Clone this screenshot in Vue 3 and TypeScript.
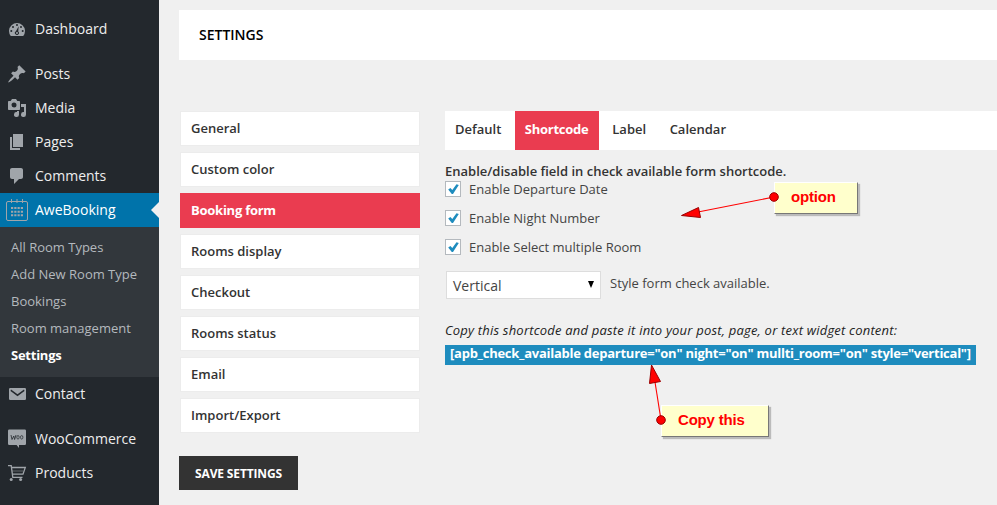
<script setup lang="ts">
interface MenuEntry {
  label: string
  icon: string
  active?: boolean
  gap?: boolean
}

const topMenu: MenuEntry[] = [
  { label: 'Dashboard', icon: 'dashboard' },
  { label: 'Posts', icon: 'posts', gap: true },
  { label: 'Media', icon: 'media' },
  { label: 'Pages', icon: 'pages' },
  { label: 'Comments', icon: 'comments' },
  { label: 'AweBooking', icon: 'calendar', active: true },
]
const submenu = ['All Room Types', 'Add New Room Type', 'Bookings', 'Room management', 'Settings']
const bottomMenu: MenuEntry[] = [
  { label: 'Contact', icon: 'mail' },
  { label: 'WooCommerce', icon: 'woo', gap: true },
  { label: 'Products', icon: 'cart' },
]
const icons: Record<string, string> = {
  dashboard:
    'M3.76 17h12.48A8 8 0 1 0 3.76 17zM9 6a1 1 0 1 1 2 0 1 1 0 0 1-2 0zM5 8a1 1 0 1 1 2 0 1 1 0 0 1-2 0zM13 8a1 1 0 1 1 2 0 1 1 0 0 1-2 0zM3.3 12a1 1 0 1 1 2 0 1 1 0 0 1-2 0zM14.7 12a1 1 0 1 1 2 0 1 1 0 0 1-2 0zM11.7 7.2l-.5 5.2a2 2 0 1 1-2.3-.2zM10 13a1 1 0 1 0 0 2 1 1 0 0 0 0-2z',
  posts:
    'M10.44 3.02l1.82-1.82 6.36 6.35-1.83 1.82c-1.05-.68-2.48-.57-3.41.36l-.75.75c-.92.93-1.04 2.35-.35 3.41l-1.83 1.82-2.41-2.41-2.8 2.79c-.42.42-3.38 2.71-3.8 2.29s1.86-3.39 2.28-3.81l2.79-2.79L4.1 9.36l1.83-1.82c1.05.69 2.48.57 3.4-.36l.75-.75c.93-.92 1.05-2.35.36-3.41z',
  media:
    'M13 11V4c0-.55-.45-1-1-1h-1.67L9 1H5L3.67 3H2c-.55 0-1 .45-1 1v7c0 .55.45 1 1 1h10c.55 0 1-.45 1-1zM7 4.5a2.5 2.5 0 1 1 0 5 2.5 2.5 0 0 1 0-5zM14 6h5v10.5a2.5 2.5 0 1 1-2-2.45V9h-3V6zM10 14.05V13h2v3.5a2.5 2.5 0 1 1-2-2.45z',
  pages: 'M6 15V2h10v13H6zM5 16h8v2H3V5h2v11z',
  comments:
    'M5 2h9c1.1 0 2 .9 2 2v7c0 1.1-.9 2-2 2h-2l-5 5v-5H5c-1.1 0-2-.9-2-2V4c0-1.1.9-2 2-2z',
  mail:
    'M3.2 4h14.6a1.2 1.2 0 0 1 1.2 1.2v9.6a1.2 1.2 0 0 1-1.2 1.2H3.2A1.2 1.2 0 0 1 2 14.8V5.2A1.2 1.2 0 0 1 3.2 4zM4 5.6L3.5 7l7 5.2 7-5.2-.5-1.4-6.5 4.7z',
}
const sections = [
  'General',
  'Custom color',
  'Booking form',
  'Rooms display',
  'Checkout',
  'Rooms status',
  'Email',
  'Import/Export',
]
const tabs = ['Default', 'Shortcode', 'Label', 'Calendar']
const options = ['Enable Departure Date', 'Enable Night Number', 'Enable Select multiple Room']
const menus = [topMenu, bottomMenu]
</script>

<template>
  <div class="screen">
    <aside class="sidebar">
      <template v-for="(menu, m) in menus" :key="m">
        <div
          v-for="item in menu"
          :key="item.label"
          class="menu-item"
          :class="{ active: item.active, gap: item.gap }"
        >
          <svg v-if="icons[item.icon]" class="icon" viewBox="0 0 20 20">
            <path :d="icons[item.icon]" fill="currentColor" fill-rule="evenodd" />
          </svg>
          <svg v-else-if="item.icon === 'calendar'" class="icon calendar" viewBox="0 0 22 22">
            <rect x="0.5" y="2.5" width="21" height="19" rx="1.5" fill="none" stroke="currentColor" />
            <path d="M5.5 0v4M11 0v4M16.5 0v4" stroke="currentColor" />
            <path
              d="M5 9h12M5 12.7h12M5 16.3h12"
              stroke="currentColor"
              stroke-width="2"
              stroke-dasharray="2.2 1.07"
            />
          </svg>
          <svg v-else-if="item.icon === 'woo'" class="icon" viewBox="0 0 20 20">
            <path
              d="M2.2 0.5h15.6a1.2 1.2 0 0 1 1.2 1.2v13.1a1.2 1.2 0 0 1-1.2 1.2H12v3l-2.4-3H2.2A1.2 1.2 0 0 1 1 14.8V1.7A1.2 1.2 0 0 1 2.2 0.5z"
              fill="currentColor"
            />
            <path
              d="M4 6l1 4.5L6.8 7l.8 3.5L9 6"
              fill="none"
              stroke="#23282d"
              stroke-width="0.8"
            />
            <ellipse cx="11" cy="8.3" rx="1.2" ry="1.8" fill="none" stroke="#23282d" stroke-width="0.7" />
            <ellipse cx="14.7" cy="8.3" rx="1.2" ry="1.8" fill="none" stroke="#23282d" stroke-width="0.7" />
          </svg>
          <svg v-else class="icon" viewBox="0 0 20 20">
            <g fill="none" stroke="currentColor" stroke-width="1.3">
              <path d="M1 2.6h3.2l1.6 11.8h9.7M4.4 4.5h13.9l-2.3 6.7H5.4" />
              <path d="M5 8h11" stroke-width="0.5" />
            </g>
            <circle cx="4.2" cy="16.6" r="1.5" fill="currentColor" />
            <circle cx="13.6" cy="16.6" r="1.5" fill="currentColor" />
          </svg>
          <span class="menu-label">{{ item.label }}</span>
        </div>
        <ul v-if="m === 0" class="submenu">
          <li v-for="s in submenu" :key="s" :class="{ current: s === 'Settings' }">{{ s }}</li>
        </ul>
      </template>
    </aside>

    <main class="content">
      <h1 class="title"><span>SETTINGS</span></h1>
      <div class="body">
        <div class="left">
          <nav class="sections">
            <div
              v-for="s in sections"
              :key="s"
              class="section"
              :class="{ selected: s === 'Booking form' }"
            >
              {{ s }}
            </div>
          </nav>
          <button class="save"><span>SAVE SETTINGS</span></button>
        </div>
        <section class="panel">
          <div class="tabs">
            <div v-for="t in tabs" :key="t" class="tab" :class="{ selected: t === 'Shortcode' }">
              <span>{{ t }}</span>
            </div>
          </div>
          <div class="lead"><span>Enable/disable field in check available form shortcode.</span></div>
          <div class="options">
            <label v-for="o in options" :key="o" class="option">
              <span class="box">
                <svg viewBox="0 0 14 14">
                  <path d="M2.2 7.4l2.2-1.4 1.9 2.1L10.5 2.2l2.3.7L7 12H5.8z" fill="#1e8cbe" />
                </svg>
              </span>
              <span>{{ o }}</span>
            </label>
          </div>
          <div class="style-row">
            <div class="select">
              <span>Vertical</span>
              <svg class="caret" viewBox="0 0 6 7"><path d="M0 0h6L3 7z" /></svg>
            </div>
            <span class="hint">Style form check available.</span>
          </div>
          <div class="copy">
            <em>Copy this shortcode and paste it into your post, page, or text widget content:</em>
          </div>
          <div class="code">
            <span>[apb_check_available departure="on" night="on" mullti_room="on" style="vertical"]</span>
          </div>
        </section>
      </div>
    </main>

    <div class="note note-option"><span>option</span></div>
    <div class="note note-copy"><span>Copy this</span></div>
    <svg class="arrows" viewBox="0 0 997 505">
      <g stroke="#f00" fill="none" stroke-width="1.1">
        <path d="M774 197L698 212" />
        <path d="M661 420L655 382" />
      </g>
      <g stroke="#900" fill="#f00" stroke-width="1">
        <path d="M681.5 215.5L698.5 207.5L700.5 217.5z" />
        <path d="M651.5 365L649.5 383.5L660.5 381.5z" />
        <circle cx="774" cy="197" r="4.3" />
        <circle cx="661" cy="420" r="4.3" />
      </g>
    </svg>
  </div>
</template>

<style>
body {
  margin: 0;
  background: #f0f0f0;
}
</style>

<style scoped>
* {
  box-sizing: border-box;
}
.screen {
  position: relative;
  display: flex;
  width: 997px;
  height: 505px;
  overflow: hidden;
  background: #f0f0f0;
  font-family: 'Open Sans', sans-serif;
  font-size: 13px;
  color: #333;
  white-space: nowrap;
}
.sidebar {
  width: 159px;
  padding-top: 12px;
  background: #23282d;
}
.menu-item {
  position: relative;
  display: flex;
  align-items: center;
  gap: 8px;
  height: 34px;
  padding-left: 7px;
  font-size: 14px;
  color: #eee;
}
.menu-label {
  padding-bottom: 2px;
}
.menu-item.gap {
  margin-top: 11px;
}
.menu-item.active {
  background: #0073aa;
  color: #fff;
}
.menu-item.active::after {
  content: '';
  position: absolute;
  right: 0;
  top: 9px;
  border: 8px solid transparent;
  border-left: 0;
  border-right-color: #f0f0f0;
}
.icon {
  flex: none;
  width: 20px;
  height: 20px;
  color: #a0a5aa;
}
.icon.calendar {
  width: 22px;
  height: 22px;
  margin: 0 -1px;
}
.submenu {
  margin: 0;
  padding: 7px 0 8px 11px;
  list-style: none;
  background: #32373c;
  color: #b4b9be;
}
.submenu li {
  height: 27px;
  line-height: 27px;
}
.submenu .current {
  font-weight: 700;
  letter-spacing: -0.25px;
  color: #fff;
}
.content {
  flex: 1;
  min-width: 0;
  padding: 10px 0 0 20px;
}
.title {
  height: 50px;
  margin: 0 0 51px;
  padding-left: 20px;
  background: #fff;
  font-size: 14px;
  font-weight: 600;
  line-height: 50px;
  color: #000;
}
.body {
  display: flex;
  gap: 25px;
}
.left {
  width: 241px;
}
.sections {
  display: grid;
  gap: 6px;
  padding-left: 1px;
}
.section {
  height: 35px;
  padding-left: 10px;
  border: 1px solid #ececec;
  background: #fff;
  font-weight: 600;
  line-height: 33px;
}
.section.selected {
  border-color: #ea3c50;
  background: #ea3c50;
  color: #fff;
  font-weight: 700;
  letter-spacing: -0.25px;
}
.save {
  width: 119px;
  height: 34px;
  margin-top: 23px;
  padding: 0;
  border: 0;
  background: #333;
  color: #fff;
  font: 700 12px 'Open Sans', sans-serif;
  letter-spacing: -0.15px;
}
.panel {
  flex: 1;
  min-width: 0;
}
.tabs {
  display: flex;
  gap: 3.5px;
  height: 39px;
  background: #fff;
  font-weight: 600;
  line-height: 37px;
}
.tab {
  padding: 0 10px;
}
.tab.selected {
  width: 84px;
  background: #ea3c50;
  color: #fff;
  font-weight: 700;
  letter-spacing: -0.25px;
}
.lead {
  height: 31px;
  padding-top: 12px;
  font-weight: 600;
  line-height: 18px;
}
.options {
  display: grid;
  gap: 13px;
}
.option {
  display: flex;
  align-items: center;
  gap: 8px;
  height: 16px;
  color: #444;
}
.box {
  width: 16px;
  height: 16px;
  border: 1px solid #b4b9be;
  background: #fff;
}
.box svg {
  display: block;
  width: 14px;
  height: 14px;
}
.style-row {
  display: flex;
  gap: 9px;
  margin: 16px 0 0 1px;
  color: #444;
}
.select {
  display: flex;
  align-items: center;
  justify-content: space-between;
  width: 155px;
  height: 28px;
  padding: 1px 6px 0;
  border: 1px solid #ddd;
  background: #fff;
  font-size: 14px;
}
.caret {
  width: 6px;
  height: 7px;
  margin-top: -2px;
}
.hint {
  line-height: 24px;
}
.copy {
  margin-top: 22px;
  letter-spacing: 0.2px;
  line-height: 18px;
  color: #222;
}
.code {
  width: 531px;
  height: 20px;
  margin-top: 6px;
  padding-left: 5px;
  background: #1e8cbe;
  color: #fff;
  font-weight: 700;
  letter-spacing: -0.25px;
  line-height: 17px;
}
.note {
  position: absolute;
  height: 32px;
  border: 1px solid #fff;
  border-right-color: #777;
  border-bottom-color: #777;
  background: #ffffcc;
  box-shadow: 2px 2px 1px #bbb;
  font: 700 15px/28px 'Liberation Sans', sans-serif;
  letter-spacing: -0.2px;
  color: #f00;
}
.note-option {
  left: 774px;
  top: 182px;
  width: 84px;
  padding-left: 16px;
}
.note-copy {
  left: 661px;
  top: 405px;
  width: 108px;
  padding-left: 16px;
}
.arrows {
  position: absolute;
  left: 0;
  top: 0;
  width: 997px;
  height: 505px;
}
</style>
